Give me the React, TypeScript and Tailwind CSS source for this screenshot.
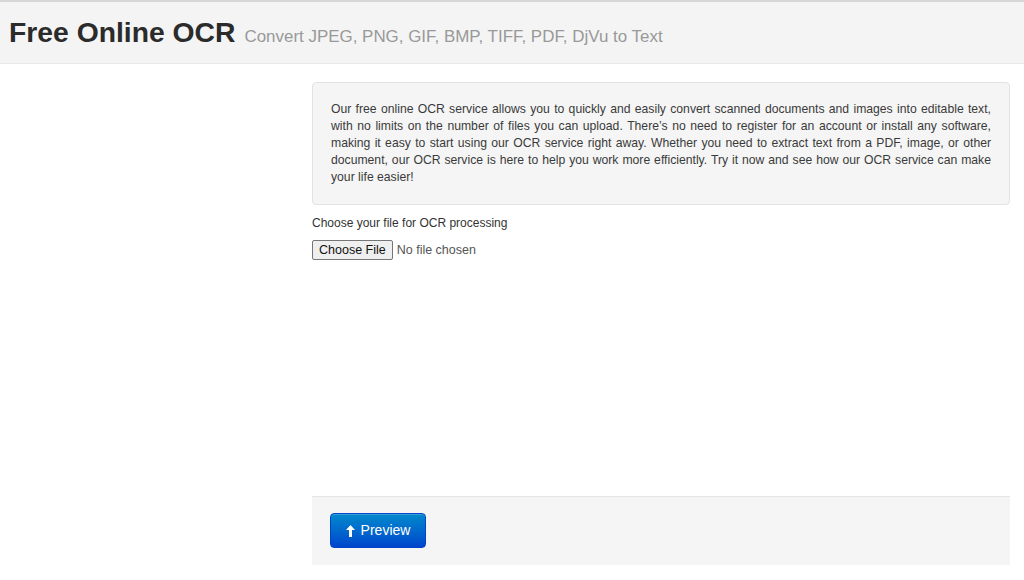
const lines = [
  'Our free online OCR service allows you to quickly and easily convert scanned documents and images into editable text,',
  'with no limits on the number of files you can upload. There’s no need to register for an account or install any software,',
  'making it easy to start using our OCR service right away. Whether you need to extract text from a PDF, image, or other',
  'document, our OCR service is here to help you work more efficiently. Try it now and see how our OCR service can make',
  'your life easier!',
];

export default function App() {
  return (
    <div className="min-h-[580px] bg-white font-['Liberation_Sans',Arial,sans-serif] text-[#333] border-t-2 border-[#d6d6d6]">
      <header className="h-[62px] bg-[#f4f4f4] border-b border-[#e9e9e9] flex items-center pl-[9px]">
        <h1 className="flex items-baseline gap-[9px] -mt-[1px]">
          <span className="text-[28.3px] font-bold leading-none text-[#2b2b2b]">Free Online OCR</span>
          <span className="text-[16.95px] leading-none text-[#999]">Convert JPEG, PNG, GIF, BMP, TIFF, PDF, DjVu to Text</span>
        </h1>
      </header>
      <div className="flex">
        <aside className="w-[312px] shrink-0" />
        <main className="w-[698px] pt-[18px]">
          <div className="bg-[#f5f5f5] border border-[#e3e3e3] rounded-[4px] px-[18px] py-[18px]">
            <p className="text-[12.2px] leading-[17px] text-[#3a3a3a]">
              {lines.map((line, i) => (
                <span
                  key={i}
                  className={i < lines.length - 1 ? 'block whitespace-nowrap text-justify [text-align-last:justify]' : 'block'}
                >
                  {line}
                </span>
              ))}
            </p>
          </div>
          <form className="mt-[10px]">
            <label htmlFor="file" className="block text-[12px] leading-[17px] text-[#333]">
              Choose your file for OCR processing
            </label>
            <input
              id="file"
              type="file"
              className="mt-[8px] block text-[12.5px] leading-[16px] text-[#555] file:mr-[4px] file:px-[6px] file:py-[1px] file:border file:border-solid file:border-[#767676] file:rounded-[2px] file:bg-[#efefef] file:text-[#111] file:text-[12.5px]"
            />
            <div className="mt-[236px] bg-[#f5f5f5] border-t border-[#e5e5e5] pt-[16px] pb-[17px] pl-[18px]">
              <button
                type="button"
                className="h-[35px] w-[96px] flex items-center justify-center gap-[6px] rounded-[4px] border border-[#0044cc] bg-gradient-to-b from-[#0088cc] to-[#0044cc] text-white text-[14px] shadow-[inset_0_1px_0_rgba(255,255,255,0.2)]"
              >
                <svg width="9" height="12" viewBox="0 0 9 12" fill="white">
                  <path d="M4.5 0 L9 5 L6 5 L6 12 L3 12 L3 5 L0 5 Z" />
                </svg>
                <span>Preview</span>
              </button>
            </div>
          </form>
        </main>
      </div>
    </div>
  );
}
